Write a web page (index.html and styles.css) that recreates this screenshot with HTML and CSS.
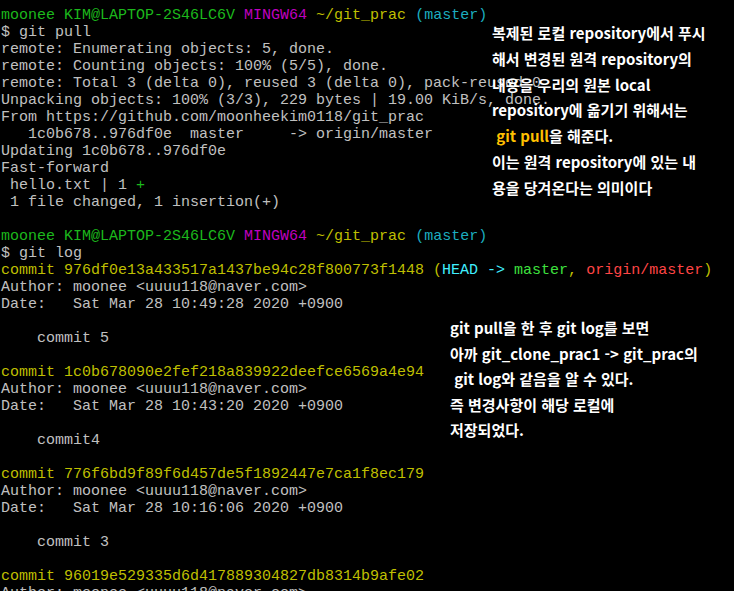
FILE: index.html
```html
<!DOCTYPE html>
<html lang="ko">
<head>
<meta charset="utf-8">
<title>git pull</title>
<link rel="stylesheet" href="styles.css">
</head>
<body>
<div class="screen">
<pre class="term"><span class="g">moonee KIM@LAPTOP-2S46LC6V</span> <span class="m">MINGW64</span> <span class="y">~/git_prac</span> <span class="c">(master)</span>
$ git pull
remote: Enumerating objects: 5, done.
remote: Counting objects: 100% (5/5), done.
remote: Total 3 (delta 0), reused 3 (delta 0), pack-reused 0
Unpacking objects: 100% (3/3), 229 bytes | 19.00 KiB/s, done.
From https://github.com/moonheekim0118/git_prac
   1c0b678..976df0e  master     -&gt; origin/master
Updating 1c0b678..976df0e
Fast-forward
 hello.txt | 1 <span class="g">+</span>
 1 file changed, 1 insertion(+)

<span class="g">moonee KIM@LAPTOP-2S46LC6V</span> <span class="m">MINGW64</span> <span class="y">~/git_prac</span> <span class="c">(master)</span>
$ git log
<span class="y">commit 976df0e13a433517a1437be94c28f800773f1448 (</span><span class="bc">HEAD -&gt; </span><span class="bg">master</span><span class="y">, </span><span class="br">origin/master</span><span class="y">)</span>
Author: moonee &lt;uuuu118@naver.com&gt;
Date:   Sat Mar 28 10:49:28 2020 +0900

    commit 5

<span class="y">commit 1c0b678090e2fef218a839922deefce6569a4e94</span>
Author: moonee &lt;uuuu118@naver.com&gt;
Date:   Sat Mar 28 10:43:20 2020 +0900

    commit4

<span class="y">commit 776f6bd9f89f6d457de5f1892447e7ca1f8ec179</span>
Author: moonee &lt;uuuu118@naver.com&gt;
Date:   Sat Mar 28 10:16:06 2020 +0900

    commit 3

<span class="y">commit 96019e529335d6d417889304827db8314b9afe02</span>
Author: moonee &lt;uuuu118@naver.com&gt;</pre>
<div class="note note-pull">
<p>복제된 로컬 repository에서 푸시</p>
<p>해서 변경된 원격 repository의</p>
<p>내용을 우리의 원본 local</p>
<p>repository에 옮기기 위해서는</p>
<p>&nbsp;<span class="gold">git pull</span>을 해준다.</p>
<p>이는 원격 repository에 있는 내</p>
<p>용을 당겨온다는 의미이다</p>
</div>
<div class="note note-log">
<p>git pull을 한 후 git log를 보면</p>
<p>아까 git_clone_prac1 -&gt; git_prac의</p>
<p>&nbsp;git log와 같음을 알 수 있다.</p>
<p>즉 변경사항이 해당 로컬에</p>
<p>저장되었다.</p>
</div>
</div>
</body>
</html>
```
FILE: styles.css
```css
html, body {
  margin: 0;
  padding: 0;
  background: #000;
}
.screen {
  position: relative;
  width: 734px;
  height: 591px;
  overflow: hidden;
  background: #000;
}
.term {
  margin: 0;
  padding: 7px 0 0 1px;
  font-family: "Liberation Mono", "DejaVu Sans Mono", monospace;
  font-size: 15px;
  line-height: 17px;
  color: #c0c0c0;
  white-space: pre;
}
.g { color: #1cb81c; }
.m { color: #bf00bf; }
.y { color: #bfbf00; }
.c { color: #1cadbf; }
.bc { color: #40f0ff; }
.bg { color: #3ee03e; }
.br { color: #ff4545; }

.note {
  position: absolute;
  font-family: "Noto Sans CJK KR", "Noto Sans", sans-serif;
  font-weight: 700;
  font-size: 15px;
  color: #fff;
}
.note p {
  margin: 0;
  white-space: pre;
}
.note-pull {
  left: 492px;
  top: 20px;
  line-height: 25.8px;
}
.note-log {
  left: 450px;
  top: 315px;
  line-height: 25.5px;
}
.gold { color: #ffc000; }
```
